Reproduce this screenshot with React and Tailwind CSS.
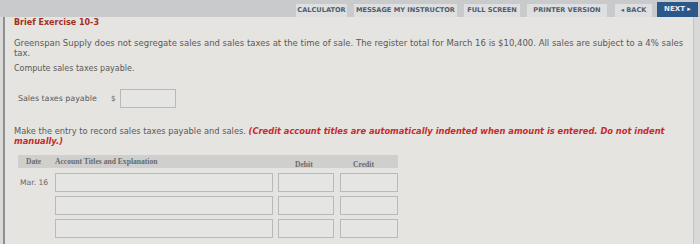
import React from 'react';

const topButtons = [
    { label: 'CALCULATOR', w: 'w-[51px]' },
    { label: 'MESSAGE MY INSTRUCTOR', w: 'w-[103px]' },
    { label: 'FULL SCREEN', w: 'w-[56px]' },
    { label: 'PRINTER VERSION', w: 'w-[80px]' },
];

const Field = ({ className }) => (
    <div className={`h-[19px] border border-[#b9b9b7] bg-[#e5e5e3] ${className}`} />
);

const EntryRow = ({ date }) => (
    <div className="flex items-start h-[23px]">
        <div className="w-[37px] pt-[4px] pl-[2px] text-[7.6px] text-[#666]">{date}</div>
        <Field className="w-[218px]" />
        <Field className="w-[56px] ml-[5px]" />
        <Field className="w-[58px] ml-[6px]" />
    </div>
);

const App = () => {
    return (
        <div className="w-[700px] h-[244px] overflow-hidden bg-[#d9d9d8] font-['DejaVu_Sans',sans-serif]">
            {/* toolbar */}
            <div className="h-[17px] bg-[#c9cacc] flex items-end pl-[296px] gap-[7px]">
                {topButtons.map((b) => (
                    <div key={b.label} className={`${b.w} h-[13px] flex items-center justify-center bg-[#dedfe1] text-[6.6px] font-bold text-[#525b68] whitespace-nowrap`}>
                        {b.label}
                    </div>
                ))}
                <div className="w-[37px] ml-[1px] h-[13px] flex items-center justify-center bg-[#dedfe1] text-[6.6px] font-bold text-[#525b68]">
                    ◂ BACK
                </div>
                <div className="w-[41px] ml-[-2px] h-[15px] flex items-center justify-center bg-[#2b5888] text-[7px] font-bold text-[#e8eef6]">
                    NEXT ▸
                </div>
            </div>

            {/* question panel */}
            <div className="ml-[3px] mr-[6px] h-[227px] bg-[#e5e4e1] border-l-[2px] border-l-[#8f8f8f] border-r border-r-[#c4c4c2] pl-[9px] pr-[8px] text-[#595959]">
                <div className="pt-[1px] text-[8px] leading-[10px] font-bold text-[#a2301f]">Brief Exercise 10-3</div>
                <p className="mt-[10px] text-[8.5px] leading-[10px]">
                    Greenspan Supply does not segregate sales and sales taxes at the time of sale. The register total for March 16 is $10,400. All sales are subject to a 4% sales tax.
                </p>
                <p className="mt-[6px] text-[8px] leading-[10px]">Compute sales taxes payable.</p>

                <div className="mt-[15px] ml-[4px] flex items-center">
                    <span className="w-[93px] text-[7.9px]">Sales taxes payable</span>
                    <span className="w-[9px] text-[7.5px] text-[#666]">$</span>
                    <Field className="w-[56px]" />
                </div>

                <p className="mt-[18px] text-[8.3px] leading-[10px]">
                    Make the entry to record sales taxes payable and sales.{' '}
                    <span className="font-bold italic text-[#c62b2b]">
                        (Credit account titles are automatically indented when amount is entered. Do not indent manually.)
                    </span>
                </p>

                <div className="mt-[9px] ml-[4px] w-[380px]">
                    <div className="h-[13px] bg-[#cfcfcd] flex items-start font-['Liberation_Serif',serif] font-bold text-[7.6px] text-[#6a6a6a]">
                        <span className="w-[37px] pl-[8px] pt-[1px]">Date</span>
                        <span className="w-[218px] pt-[1px]">Account Titles and Explanation</span>
                        <span className="w-[61px] pl-[22px] pt-[4px]">Debit</span>
                        <span className="w-[64px] pl-[19px] pt-[4px]">Credit</span>
                    </div>
                    <div className="pt-[5px]">
                        <EntryRow date="Mar. 16" />
                        <EntryRow />
                        <EntryRow />
                    </div>
                </div>
            </div>
        </div>
    );
};

export default App;
